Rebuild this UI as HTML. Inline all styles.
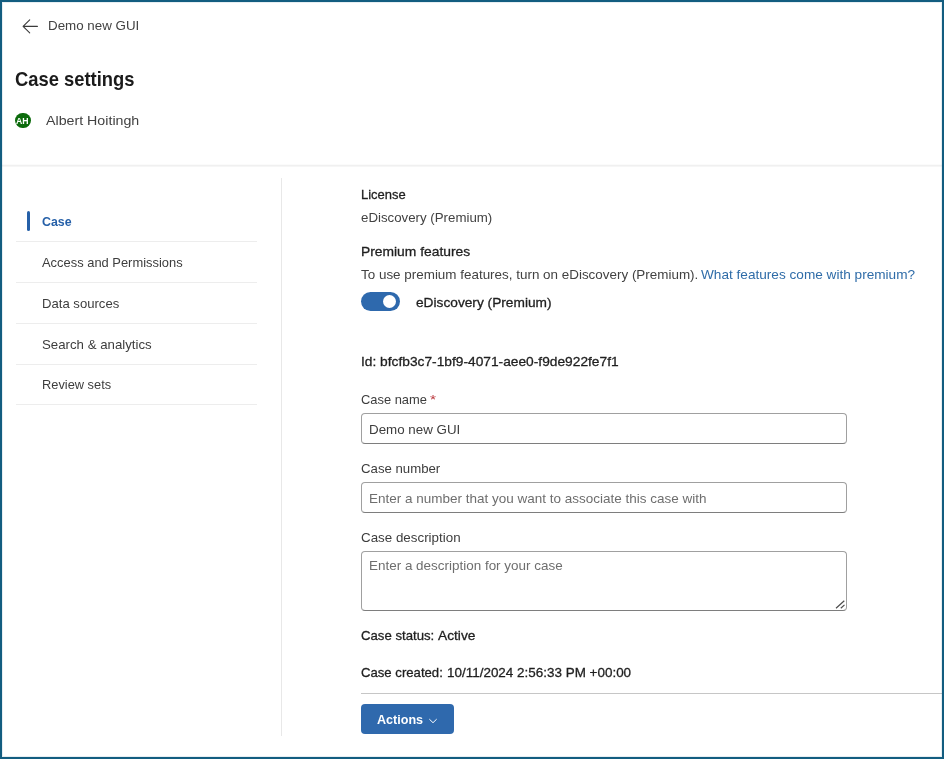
<!DOCTYPE html>
<html>
<head>
<meta charset="utf-8">
<title>Case settings</title>
<style>
html,body{margin:0;padding:0;}
body{width:944px;height:759px;position:relative;overflow:hidden;background:#fff;font-family:"Liberation Sans",sans-serif;}
.frame{position:absolute;left:0;top:0;width:940px;height:755px;border:2px solid #135d80;box-shadow:inset 0 0 0 1px rgba(19,93,128,0.10);pointer-events:none;z-index:10;}
.t{position:absolute;white-space:pre;line-height:20px;transform-origin:0 0;font-family:"Liberation Sans",sans-serif;}
.abs{position:absolute;}
.hline{position:absolute;height:1px;background:#ededed;}
.box{position:absolute;box-sizing:border-box;border:1px solid #a0a0a0;border-bottom-color:#7e7e7e;border-radius:4px;background:#fff;}
</style>
</head>
<body>
<div class="frame"></div>
<div id="wrap" style="position:absolute;left:0;top:0;width:944px;height:759px;will-change:transform;">

<!-- back arrow -->
<svg class="abs" style="left:20px;top:16px" width="22" height="22" viewBox="0 0 22 22">
  <path d="M17.4 10.4 H3.4 M9.7 3.8 L3.1 10.4 L9.7 16.9" fill="none" stroke="#3b3b3b" stroke-width="1.1" stroke-linecap="round" stroke-linejoin="round"/>
</svg>

<!-- avatar -->
<div class="abs" style="left:15px;top:112.8px;width:15.7px;height:15.7px;border-radius:50%;background:#0c6b0c;"></div>
<span class="t" style="left:16.4px;top:113px;line-height:16px;font-size:9px;font-weight:700;color:#fff;transform:scaleX(0.97);">AH</span>

<!-- header separator -->
<div class="hline" style="left:2px;top:165px;width:940px;background:#f0f0f0;"></div>
<div class="hline" style="left:2px;top:166px;width:940px;background:#f6f6f6;"></div>
<div class="hline" style="left:2px;top:164px;width:940px;background:#fbfbfb;"></div>

<!-- vertical divider -->
<div class="abs" style="left:281px;top:178px;width:1px;height:558px;background:#e8e8e8;"></div>

<!-- nav -->
<div class="abs" style="left:26.8px;top:211px;width:3.2px;height:20px;border-radius:2px;background:#2660a8;"></div>
<div class="hline" style="left:16px;top:241px;width:241px;"></div>
<div class="hline" style="left:16px;top:282px;width:241px;"></div>
<div class="hline" style="left:16px;top:323px;width:241px;"></div>
<div class="hline" style="left:16px;top:363.5px;width:241px;"></div>
<div class="hline" style="left:16px;top:404px;width:241px;"></div>

<!-- toggle -->
<div class="abs" style="left:361.3px;top:292.2px;width:38.6px;height:18.7px;border-radius:10px;background:#2e69ad;"></div>
<div class="abs" style="left:382.8px;top:294.7px;width:13.7px;height:13.7px;border-radius:50%;background:#fff;"></div>

<!-- inputs -->
<div class="box" style="left:361px;top:412.5px;width:486px;height:31.5px;"></div>
<div class="box" style="left:361px;top:482px;width:486px;height:31px;"></div>
<div class="box" style="left:361px;top:551px;width:486px;height:59.5px;"></div>
<svg class="abs" style="left:834px;top:598px" width="12" height="12" viewBox="0 0 12 12">
  <path d="M2.0 10.3 L10.3 2.8 M6.8 10.3 L10.5 6.9" fill="none" stroke="#4c4c4c" stroke-width="1.2"/>
</svg>

<!-- bottom separator -->
<div class="hline" style="left:361px;top:692.5px;width:581px;background:#c6c6c6;"></div>

<!-- button -->
<div class="abs" style="left:361px;top:704px;width:93px;height:30px;border-radius:4px;background:#2f69ad;"></div>
<svg class="abs" style="left:426.6px;top:714.5px" width="12" height="12" viewBox="0 0 12 12">
  <path d="M2.6 4.4 L6 7.7 L9.4 4.4" fill="none" stroke="#fff" stroke-width="1" stroke-linecap="round" stroke-linejoin="round"/>
</svg>

<span class="t" style="left:47.90px;top:16.00px;font-size:13.5px;font-weight:400;color:#424242;transform:scaleX(0.9895);">Demo new GUI</span>
<span class="t" style="left:14.84px;top:70.00px;font-size:19.3px;font-weight:700;color:#1b1b1b;transform:scaleX(0.9531);">Case settings</span>
<span class="t" style="left:45.76px;top:111.00px;font-size:13.5px;font-weight:400;color:#424242;transform:scaleX(1.0532);">Albert Hoitingh</span>
<span class="t" style="left:41.75px;top:212.00px;font-size:13.5px;font-weight:700;color:#2660a8;transform:scaleX(0.9171);">Case</span>
<span class="t" style="left:41.99px;top:253.00px;font-size:13.5px;font-weight:400;color:#3d3d3d;transform:scaleX(0.9564);">Access and Permissions</span>
<span class="t" style="left:41.62px;top:294.00px;font-size:13.5px;font-weight:400;color:#3d3d3d;transform:scaleX(0.9714);">Data sources</span>
<span class="t" style="left:42.06px;top:335.00px;font-size:13.5px;font-weight:400;color:#3d3d3d;transform:scaleX(0.9815);">Search &amp; analytics</span>
<span class="t" style="left:41.65px;top:375.00px;font-size:13.5px;font-weight:400;color:#3d3d3d;transform:scaleX(0.9496);">Review sets</span>
<span class="t" style="left:361.17px;top:185.00px;font-size:13.5px;font-weight:400;color:#1f1f1f;transform:scaleX(0.9612);-webkit-text-stroke:0.3px currentColor;">License</span>
<span class="t" style="left:360.98px;top:208.00px;font-size:13.5px;font-weight:400;color:#424242;transform:scaleX(0.9831);">eDiscovery (Premium)</span>
<span class="t" style="left:361.22px;top:242.00px;font-size:13.5px;font-weight:400;color:#1f1f1f;transform:scaleX(1.0246);-webkit-text-stroke:0.3px currentColor;">Premium features</span>
<span class="t" style="left:361.35px;top:265.00px;font-size:13.5px;font-weight:400;color:#424242;transform:scaleX(0.9946);">To use premium features, turn on eDiscovery (Premium).</span>
<span class="t" style="left:700.90px;top:265.00px;font-size:13.5px;font-weight:400;color:#2f6ca8;transform:scaleX(1.0083);">What features come with premium?</span>
<span class="t" style="left:415.72px;top:293.00px;font-size:13.5px;font-weight:400;color:#1f1f1f;transform:scaleX(1.0150);-webkit-text-stroke:0.3px currentColor;">eDiscovery (Premium)</span>
<span class="t" style="left:361.17px;top:352.00px;font-size:13.5px;font-weight:400;color:#1f1f1f;transform:scaleX(1.0185);-webkit-text-stroke:0.3px currentColor;">Id: bfcfb3c7-1bf9-4071-aee0-f9de922fe7f1</span>
<span class="t" style="left:360.92px;top:390.00px;font-size:13.5px;font-weight:400;color:#3d3d3d;transform:scaleX(0.9552);">Case name</span>
<span class="t" style="left:429.87px;top:390.00px;font-size:13.5px;font-weight:400;color:#bb3a3f;transform:scaleX(1.1438);">*</span>
<span class="t" style="left:369.40px;top:420.00px;font-size:13.5px;font-weight:400;color:#3d3d3d;transform:scaleX(0.9895);">Demo new GUI</span>
<span class="t" style="left:360.90px;top:459.00px;font-size:13.5px;font-weight:400;color:#3d3d3d;transform:scaleX(0.9781);">Case number</span>
<span class="t" style="left:369.29px;top:489.00px;font-size:13.5px;font-weight:400;color:#6e6e6e;transform:scaleX(0.9994);">Enter a number that you want to associate this case with</span>
<span class="t" style="left:360.89px;top:528.00px;font-size:13.5px;font-weight:400;color:#3d3d3d;transform:scaleX(0.9903);">Case description</span>
<span class="t" style="left:369.29px;top:556.00px;font-size:13.5px;font-weight:400;color:#6e6e6e;transform:scaleX(0.9965);">Enter a description for your case</span>
<span class="t" style="left:361.05px;top:626.00px;font-size:13.5px;font-weight:400;color:#1f1f1f;transform:scaleX(0.9758);-webkit-text-stroke:0.3px currentColor;">Case status:</span>
<span class="t" style="left:437.69px;top:626.00px;font-size:13.5px;font-weight:400;color:#1f1f1f;transform:scaleX(1.0187);-webkit-text-stroke:0.3px currentColor;">Active</span>
<span class="t" style="left:361.05px;top:663.00px;font-size:13.5px;font-weight:400;color:#1f1f1f;transform:scaleX(0.9736);-webkit-text-stroke:0.3px currentColor;">Case created:</span>
<span class="t" style="left:446.81px;top:663.00px;font-size:13.5px;font-weight:400;color:#1f1f1f;transform:scaleX(0.9963);-webkit-text-stroke:0.3px currentColor;">10/11/2024 2:56:33 PM +00:00</span>
<span class="t" style="left:376.76px;top:710.00px;font-size:13.5px;font-weight:700;color:#ffffff;transform:scaleX(0.9312);">Actions</span>
</div>
</body>
</html>
